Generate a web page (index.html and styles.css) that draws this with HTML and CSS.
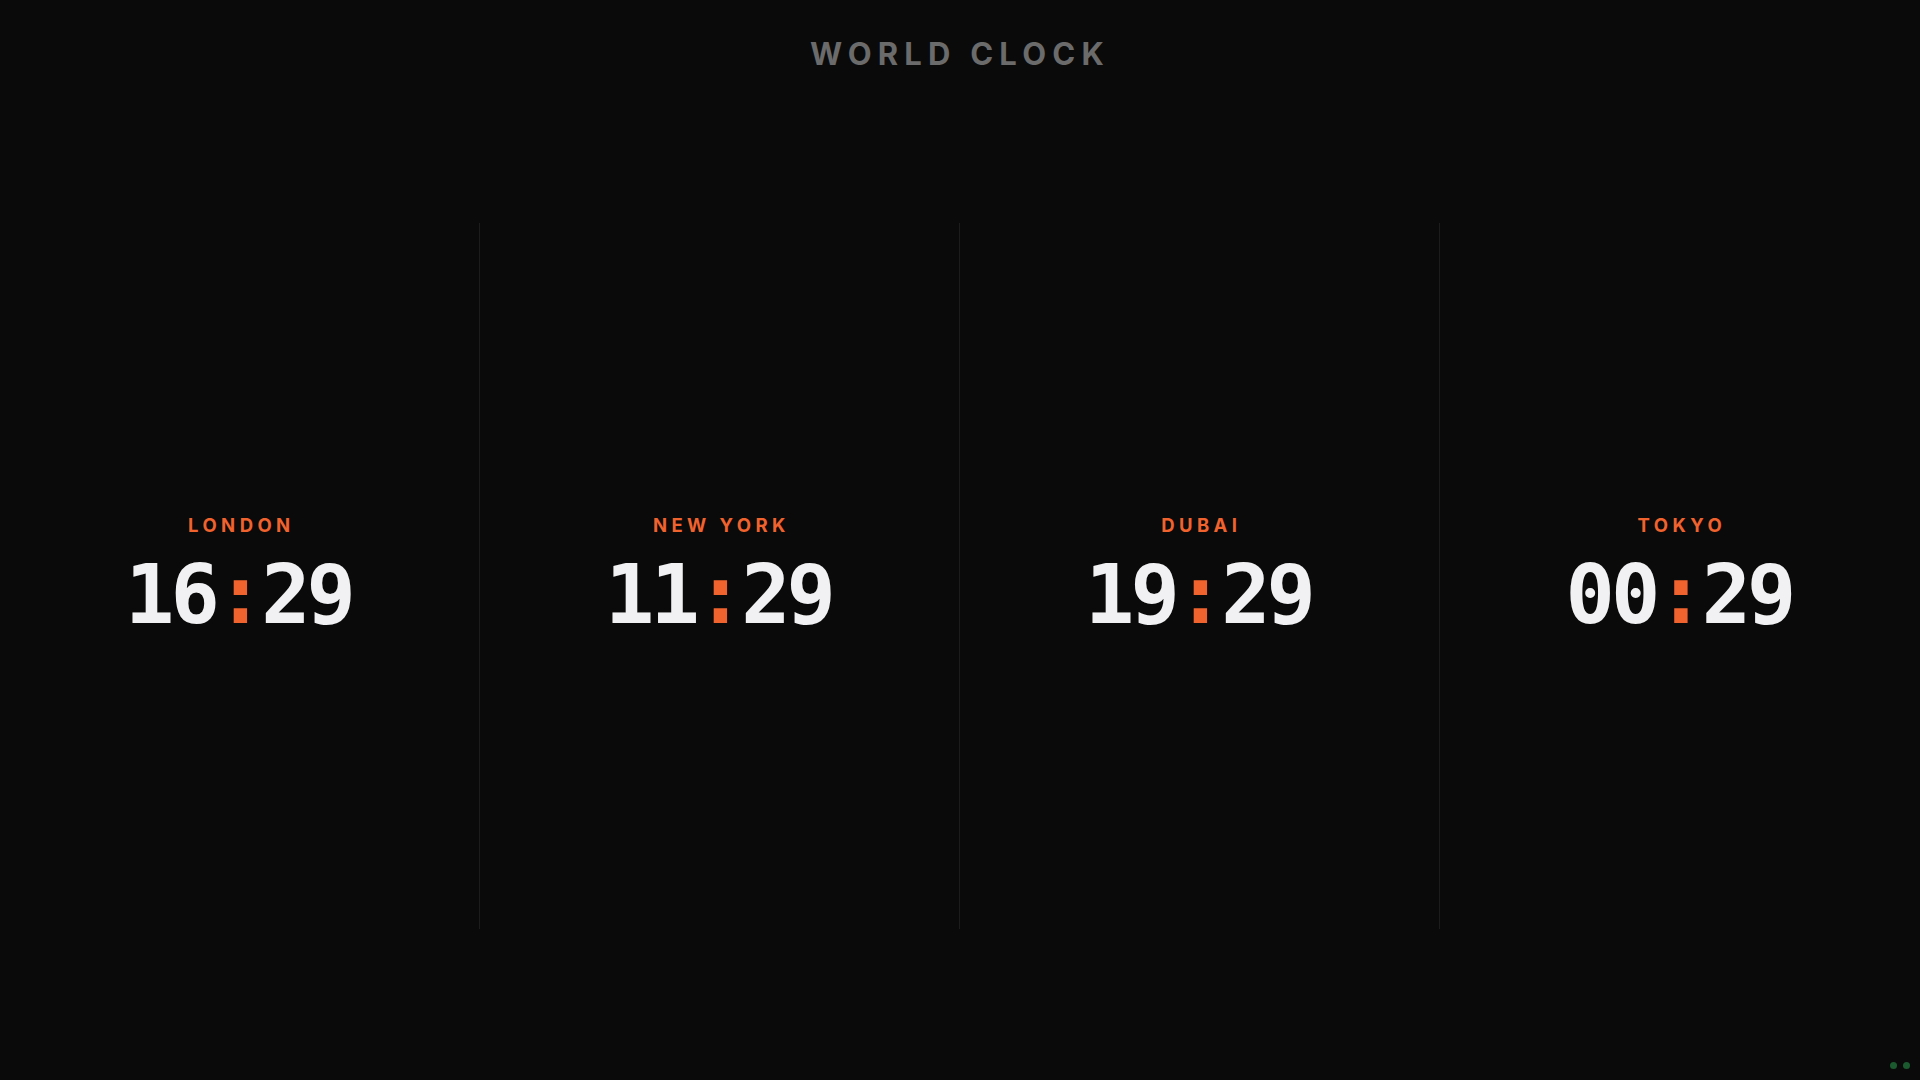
FILE: index.html
```html
<!DOCTYPE html>
<html lang="en">
<head>
<meta charset="utf-8">
<title>World Clock</title>
<link rel="stylesheet" href="styles.css">
</head>
<body>
<div class="page">
  <header class="header">
    <h1 class="title">WORLD CLOCK</h1>
  </header>
  <main class="main">
    <section class="clocks">
      <div class="clock">
        <div class="city">LONDON</div>
        <div class="time">16<span class="colon">:</span>29</div>
      </div>
      <div class="clock">
        <div class="city">NEW YORK</div>
        <div class="time">11<span class="colon">:</span>29</div>
      </div>
      <div class="clock">
        <div class="city">DUBAI</div>
        <div class="time">19<span class="colon">:</span>29</div>
      </div>
      <div class="clock">
        <div class="city">TOKYO</div>
        <div class="time">00<span class="colon">:</span>29</div>
      </div>
    </section>
  </main>
  <div class="status">
    <span class="dot"></span>
    <span class="dot"></span>
  </div>
</div>
</body>
</html>
```

FILE: styles.css
```css
* { box-sizing: border-box; }
html, body {
  margin: 0;
  padding: 0;
  background: #0a0a0a;
}
.page {
  position: relative;
  height: 100vh;
  display: flex;
  flex-direction: column;
  font-family: Inter, "Noto Sans", sans-serif;
}
.header {
  height: 72px;
  padding-top: 36px;
  display: flex;
  justify-content: center;
}
.title {
  margin: 0;
  font-size: 31px;
  line-height: 36px;
  font-weight: 650;
  letter-spacing: 0.2em;
  color: #6b6b6b;
}
.main {
  flex: 1;
  display: flex;
  align-items: center;
}
.clocks {
  width: 100%;
  height: 706px;
  display: grid;
  grid-template-columns: repeat(4, 1fr);
}
.clock {
  display: flex;
  flex-direction: column;
  align-items: center;
  justify-content: center;
  gap: 20px;
  border-right: 1px solid #1c1c1c;
}
.clock:last-child { border-right: none; }
.city {
  font-size: 18.5px;
  line-height: 18px;
  font-weight: 700;
  letter-spacing: 0.24em;
  padding-left: 0.2em;
  color: #f0622e;
}
.time {
  font-family: "DejaVu Sans Mono", "Liberation Mono", monospace;
  font-weight: 700;
  font-size: 82px;
  line-height: 82px;
  letter-spacing: -4px;
  padding-right: 2px;
  color: #f1f1f3;
}
.colon { color: #f0622e; }
.status {
  position: absolute;
  right: 10px;
  bottom: 11px;
  display: flex;
  gap: 6px;
}
.dot {
  width: 7px;
  height: 7px;
  border-radius: 50%;
  background: #1b5a2f;
}
```
